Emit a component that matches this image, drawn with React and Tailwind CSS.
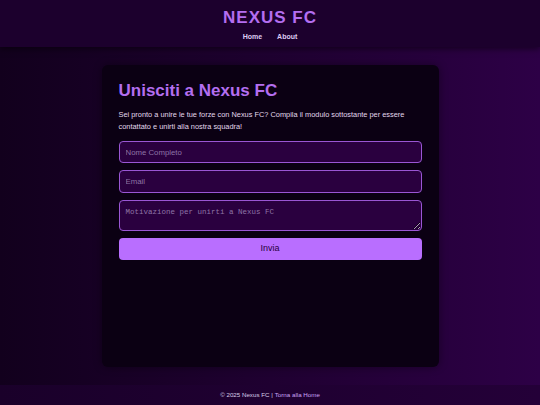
export default function App() {
  return (
    <div className="flex h-[405px] flex-col bg-gradient-to-r from-[#12001d] to-[#2d0046] font-['Liberation_Sans',Arial,sans-serif]">
      {/* Header */}
      <header className="flex h-[47px] flex-col items-center bg-[#1c002d] pt-[8px] shadow-[0_2px_6px_rgba(0,0,0,0.5)]">
        <h1 className="text-[17px] font-bold leading-[20px] tracking-[1px] text-[#b46ef0]">NEXUS FC</h1>
        <nav className="mt-[4px] flex gap-[15px] text-[7px] font-bold text-[#dccbf2]">
          <a>Home</a>
          <a>About</a>
        </nav>
      </header>

      {/* Main */}
      <main className="flex flex-1 justify-center pt-[18px] pb-[18px]">
        <div className="w-[337px] rounded-[6px] bg-[#0b0013] px-[17px] pt-[14px] shadow-[0_0_8px_rgba(0,0,0,0.4)]">
          <h2 className="text-[17px] font-bold leading-[24px] text-[#b46ef0]">Unisciti a Nexus FC</h2>
          <p className="mt-[6px] text-[7.4px] leading-[12px] text-[#e2d8ec]">
            Sei pronto a unire le tue forze con Nexus FC? Compila il modulo sottostante per essere contattato e unirti alla nostra squadra!
          </p>
          <form className="mt-[8px] flex flex-col gap-[7px]">
            <input
              placeholder="Nome Completo"
              className="h-[22px] rounded-[4px] border border-[#9a56d4] bg-[#2a003f] px-[6px] text-[7.8px] text-white outline-none placeholder:text-[#8e74a6]"
            />
            <input
              placeholder="Email"
              className="h-[23px] rounded-[4px] border border-[#9a56d4] bg-[#2a003f] px-[6px] text-[7.8px] text-white outline-none placeholder:text-[#8e74a6]"
            />
            <textarea
              placeholder="Motivazione per unirti a Nexus FC"
              className="h-[31px] resize-y rounded-[4px] border border-[#9a56d4] bg-[#2a003f] px-[6px] py-[6px] font-['Liberation_Mono',monospace] text-[7.5px] leading-[10px] text-white outline-none placeholder:text-[#8e74a6]"
            />
            <button
              type="button"
              className="h-[22px] rounded-[4px] bg-[#b96eff] text-[9px] text-[#2a0040]"
            >
              Invia
            </button>
          </form>
        </div>
      </main>

      {/* Footer */}
      <footer className="flex h-[20px] items-center justify-center bg-gradient-to-r from-[#1a002a] to-[#240038] text-[6.2px] text-[#d8cce6]">
        <span>© 2025 Nexus FC | </span>
        <a className="ml-[2px] text-[#c9a2f2]">Torna alla Home</a>
      </footer>
    </div>
  );
}
